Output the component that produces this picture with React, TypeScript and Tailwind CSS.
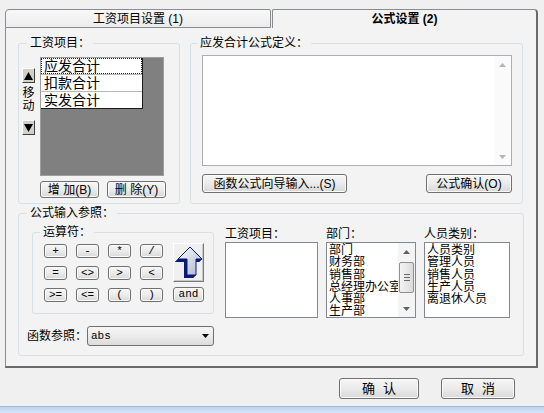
import type { ReactNode } from "react";

const SANS = "font-['Liberation_Sans','Noto_Sans_CJK_SC',sans-serif]";
const MONO = "font-['Liberation_Mono','Noto_Sans_CJK_SC',monospace]";

const OPS = ["+", "-", "*", "/", "=", "<>", ">", "<", ">=", "<=", "(", ")"];
const DEPTS = ["部门", "财务部", "销售部", "总经理办公室", "人事部", "生产部"];
const STAFF = ["人员类别", "管理人员", "销售人员", "生产人员", "离退休人员"];

function Tri({ dir, className = "", w = 7, h = 4 }: { dir: "up" | "down"; className?: string; w?: number; h?: number }) {
  return (
    <svg width={w} height={h} viewBox={`0 0 ${w} ${h}`} className={className}>
      <polygon points={dir === "up" ? `0,${h} ${w / 2},0 ${w},${h}` : `0,0 ${w},0 ${w / 2},${h}`} fill="currentColor" />
    </svg>
  );
}

function WinButton({ className = "", children }: { className?: string; children: ReactNode }) {
  return (
    <button className={`flex items-center justify-center rounded-[3px] border border-[#707070] bg-linear-to-b from-[#f6f6f6] via-[#ebebeb] to-[#d8d8d8] leading-none text-black shadow-[inset_0_0_0_1px_#fbfbfb] ${className}`}>
      {children}
    </button>
  );
}

function Group({ title, className = "", legend = "ml-[8px]", children }: { title: string; className?: string; legend?: string; children: ReactNode }) {
  return (
    <fieldset className={`m-0 p-0 rounded-[3px] border border-[#d5dfe5] ${className}`}>
      <legend className={`px-[3px] text-[12px] leading-[14px] ${legend}`}>{title}</legend>
      {children}
    </fieldset>
  );
}

function ClassicArrow({ dir }: { dir: "up" | "down" }) {
  return (
    <button className="flex h-[15px] w-[13px] items-center justify-center border border-t-white border-l-white border-r-[#404040] border-b-[#404040] bg-[#d4d0c8]">
      <Tri dir={dir} w={9} h={8} className="text-black" />
    </button>
  );
}

function BigUpArrow() {
  const front = [[15, 0], [27, 12], [21, 12], [21, 28], [12, 28], [12, 12], [3, 12]];
  const back = front.map(([x, y]) => [x - 3, y + 3]);
  const pts = (a: number[][]) => a.map((p) => p.join(",")).join(" ");
  return (
    <svg width="28" height="32" viewBox="0 0 28 32">
      <defs>
        <linearGradient id="face" x1="0" y1="0" x2="1" y2="1">
          <stop offset="0" stopColor="#ffffff" />
          <stop offset="1" stopColor="#aab3cf" />
        </linearGradient>
      </defs>
      <polygon points={pts(back)} fill="#0a1a7a" />
      {front.map((p, i) => {
        const q = front[(i + 1) % front.length];
        const bp = back[i];
        const bq = back[(i + 1) % back.length];
        return <polygon key={i} points={pts([p, q, bq, bp])} fill="#0a1a7a" />;
      })}
      <polygon points={pts(front)} fill="url(#face)" stroke="#0a1a7a" strokeWidth="1" strokeLinejoin="miter" />
    </svg>
  );
}

function ListBox({ label, items, width, scroll }: { label: string; items: string[]; width: string; scroll?: boolean }) {
  return (
    <div className="flex flex-col">
      <div className="h-[15px] text-[12px] leading-[14px]">{label}</div>
      <div className={`relative flex h-[76px] overflow-hidden border border-[#828790] bg-white ${width}`}>
        <div className="flex-1 overflow-hidden whitespace-nowrap pl-[2px] pt-[1px] text-[12px] leading-[12.3px]">
          {items.map((t) => (
            <div key={t}>{t}</div>
          ))}
        </div>
        {scroll && (
          <div className="flex w-[17px] shrink-0 flex-col items-center bg-[#f4f4f4] text-[#606060]">
            <div className="flex h-[17px] items-center justify-center">
              <Tri dir="up" />
            </div>
            <div className="mt-[2px] flex h-[31px] w-[15px] flex-col items-center justify-center gap-[2px] rounded-[2px] border border-[#8f8f8f] bg-linear-to-r from-[#f3f3f3] to-[#dcdcdc]">
              <div className="h-px w-[6px] bg-[#6a6a6a]" />
              <div className="h-px w-[6px] bg-[#6a6a6a]" />
              <div className="h-px w-[6px] bg-[#6a6a6a]" />
            </div>
            <div className="mt-auto flex h-[17px] items-center justify-center">
              <Tri dir="down" />
            </div>
          </div>
        )}
      </div>
    </div>
  );
}

export default function App() {
  return (
    <div className={`flex h-[413px] w-[544px] flex-col overflow-hidden bg-[#f0f0f0] text-[12px] text-black ${SANS}`}>
      {/* tabs */}
      <div className="flex pl-[5px] pt-[9px]">
        <div className="flex h-[19px] w-[266px] items-center justify-center rounded-tl-[4px] rounded-tr-[2px] border border-[#898c95] bg-linear-to-b from-[#f8f8f8] to-[#ececec] text-[12px] leading-none">
          工资项目设置 (1)
        </div>
        <div className="ml-[1px] flex h-[19px] w-[266px] items-center justify-center rounded-tl-[2px] rounded-tr-[4px] border-t border-l border-r-2 border-[#898c95] border-r-[#6a6a6a] bg-[#f3f3f3] text-[12px] font-bold leading-none">
          公式设置 (2)
        </div>
      </div>

      {/* panel */}
      <div className="ml-[5px] h-[340px] w-[533px] border-l border-r-2 border-b-2 border-[#898c95] border-r-[#6a6a6a] border-b-[#6a6a6a] bg-[#f3f3f3] pl-[12px] pt-[8px]">
        <div className="flex gap-[10px]">
          <Group title="工资项目：" className="h-[168px] w-[162px]">
            <div className="mt-[7px] flex gap-[5px] pl-[3px]">
              <div className="flex w-[13px] flex-col items-center pt-[11px]">
                <ClassicArrow dir="up" />
                <div className="mt-[4px] w-[12px] text-[12px] leading-[13px]">
                  移<br />动
                </div>
                <div className="mt-[7px]">
                  <ClassicArrow dir="down" />
                </div>
              </div>
              <div className="h-[119px] w-[124px] border border-[#9d9d9d] bg-[#808080]">
                <div className="w-[102px] border-r border-b border-[#1a1a1a] bg-white text-[14px] leading-[15px]">
                  <div className="h-[16px] border border-dotted border-[#222] pl-[2px]">应发合计</div>
                  <div className="h-[17px] border-t border-[#b8b8b8] pl-[3px] pt-[1px]">扣款合计</div>
                  <div className="h-[17px] border-t border-[#b8b8b8] pl-[3px] pt-[1px]">实发合计</div>
                </div>
              </div>
            </div>
            <div className="ml-[21px] mt-[5px] flex gap-[8px]">
              <WinButton className="h-[17px] w-[59px] text-[12px]">增 加(B)</WinButton>
              <WinButton className="h-[17px] w-[59px] text-[12px]">删 除(Y)</WinButton>
            </div>
          </Group>

          <Group title="应发合计公式定义：" legend="ml-[6px]" className="h-[168px] w-[333px]">
            <div className="ml-[11px] mt-[5px] flex h-[111px] w-[310px] border border-[#abadb3] bg-white">
              <div className="flex-1" />
              <div className="flex w-[17px] flex-col justify-between bg-[#fafafa] text-[#b4b4b4]">
                <div className="flex h-[17px] items-center justify-center">
                  <Tri dir="up" />
                </div>
                <div className="flex h-[17px] items-center justify-center">
                  <Tri dir="down" />
                </div>
              </div>
            </div>
            <div className="ml-[11px] mt-[8px] flex w-[310px] justify-between">
              <WinButton className="h-[19px] w-[145px] text-[12px]">函数公式向导输入...(S)</WinButton>
              <WinButton className="h-[19px] w-[86px] text-[12px]">公式确认(O)</WinButton>
            </div>
          </Group>
        </div>

        <Group title="公式输入参照：" className="mt-[2px] h-[150px] w-[506px]">
          <div className="flex pl-[8px]">
            <div className="flex flex-col">
              <Group title="运算符：" legend="ml-[7px]" className="ml-[5px] mt-[5px] h-[89px] w-[182px]">
                <div className="mt-[5px] flex pl-[11px]">
                  <div className="grid grid-cols-4 gap-x-[9px] gap-y-[8px]">
                    {OPS.map((op) => (
                      <WinButton key={op} className={`h-[14px] w-[23px] text-[11px] ${MONO}`}>
                        {op}
                      </WinButton>
                    ))}
                  </div>
                  <div className="-mt-[1px] ml-[10px] flex h-[59px] flex-col justify-between">
                    <button className="flex h-[39px] w-[31px] items-center justify-center border border-t-white border-l-white border-r-[#7a7a7a] border-b-[#7a7a7a] bg-[#f0f0f0] shadow-[inset_-1px_-1px_0_#c8c8c8]">
                      <BigUpArrow />
                    </button>
                    <WinButton className={`h-[15px] w-[31px] text-[11px] ${MONO}`}>and</WinButton>
                  </div>
                </div>
              </Group>
              <div className="mt-[12px] flex items-center">
                <div className="w-[60px] text-[12px] leading-[14px]">函数参照：</div>
                <div className="flex h-[20px] w-[127px] items-center justify-between rounded-[3px] border border-[#707070] bg-linear-to-b from-[#f6f6f6] via-[#ebebeb] to-[#dcdcdc] pl-[3px] pr-[4px]">
                  <span className={`text-[11px] leading-none ${MONO}`}>abs</span>
                  <Tri dir="down" className="text-black" />
                </div>
              </div>
            </div>

            <div className="ml-[11px] mt-[7px] flex gap-[8px]">
              <ListBox label="工资项目：" items={[]} width="w-[93px]" />
              <ListBox label="部门：" items={DEPTS} width="w-[90px]" scroll />
              <ListBox label="人员类别：" items={STAFF} width="w-[86px]" />
            </div>
          </div>
        </Group>
      </div>

      {/* dialog buttons */}
      <div className="mt-[10px] flex justify-end gap-[22px] pr-[29px]">
        <WinButton className="h-[21px] w-[80px] gap-[8px] text-[13px]">
          <span>确</span>
          <span>认</span>
        </WinButton>
        <WinButton className="h-[21px] w-[74px] gap-[8px] text-[13px]">
          <span>取</span>
          <span>消</span>
        </WinButton>
      </div>

      <div className="mt-auto h-[7px] border-t border-[#9db9d8] bg-linear-to-b from-[#bcd4ee] to-[#d6e6f6]" />
    </div>
  );
}
